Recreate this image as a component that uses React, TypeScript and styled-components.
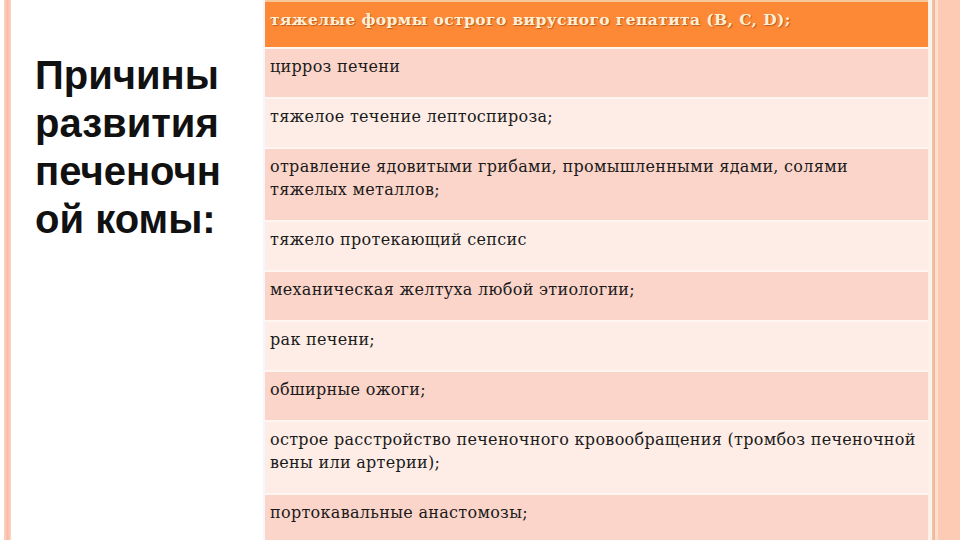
import { Fragment } from "react";
import styled, { createGlobalStyle } from "styled-components";

const GlobalStyle = createGlobalStyle`
  html, body {
    margin: 0;
    padding: 0;
    background: #ffffff;
  }
`;

// each cause is given as its printed lines
const causes: { lines: string[]; head?: boolean }[] = [
  { lines: ["тяжелые формы острого вирусного гепатита (B, C, D);"], head: true },
  { lines: ["цирроз печени"] },
  { lines: ["тяжелое течение лептоспироза;"] },
  {
    lines: [
      "отравление ядовитыми грибами, промышленными ядами, солями",
      "тяжелых металлов;",
    ],
  },
  { lines: ["тяжело протекающий сепсис"] },
  { lines: ["механическая желтуха любой этиологии;"] },
  { lines: ["рак печени;"] },
  { lines: ["обширные ожоги;"] },
  {
    lines: [
      "острое расстройство печеночного кровообращения (тромбоз печеночной",
      "вены или артерии);",
    ],
  },
  { lines: ["портокавальные анастомозы;"] },
];

export default function App() {
  return (
    <>
      <GlobalStyle />
      <Slide>
        <LeftRule />
        <TitleColumn>
          <Title>Причины развития печеночной комы:</Title>
        </TitleColumn>
        <Table>
          {causes.map((c, i) => {
            const Text = c.head ? HeadText : CellText;
            return (
              <Row key={i} $variant={c.head ? "head" : i % 2 === 1 ? "dark" : "light"}>
                <Text>
                  {c.lines.map((l, j) => (
                    <Fragment key={j}>
                      {j > 0 && <br />}
                      {l}
                    </Fragment>
                  ))}
                </Text>
              </Row>
            );
          })}
        </Table>
        <RightBand />
      </Slide>
    </>
  );
}

const Slide = styled.div`
  display: flex;
  width: 960px;
  height: 540px;
  overflow: hidden;
  background: #ffffff;
`;

const LeftRule = styled.div`
  flex: none;
  width: 7px;
  margin-left: 4px;
  background: linear-gradient(to right, #fdd3c4, #f9bca6 50%, #fdd3c4);
`;

const TitleColumn = styled.div`
  flex: none;
  width: 252px;
  box-sizing: border-box;
  padding: 51px 0 0 24px;
`;

const Title = styled.h1`
  margin: 0;
  width: 196px;
  font-family: "Liberation Sans", Arial, sans-serif;
  font-weight: 700;
  font-size: 40px;
  line-height: 48px;
  color: #111111;
  overflow-wrap: anywhere;
`;

const Table = styled.div`
  flex: none;
  width: 665px;
  display: flex;
  flex-direction: column;
  border-left: 2px solid #f4f6fb;
  box-sizing: border-box;
`;

const rowColors = {
  head: "#fd8836",
  dark: "#fcd5ca",
  light: "#fdede6",
};

const Row = styled.div<{ $variant: "head" | "dark" | "light" }>`
  flex: none;
  background: ${(p) => rowColors[p.$variant]};
  border-top: 2px solid ${(p) => (p.$variant === "head" ? "#f6c89a" : "#fff6f1")};
  padding: ${(p) => (p.$variant === "head" ? "6px 4px 16px 5px" : "6px 4px 19px 5px")};
`;

const CellText = styled.p`
  margin: 0;
  font-family: "DejaVu Serif", "Liberation Serif", serif;
  font-size: 16px;
  letter-spacing: 0.3px;
  line-height: 23px;
  color: #1a1a1a;
  white-space: nowrap;
`;

const HeadText = styled(CellText)`
  font-size: 15.5px;
  letter-spacing: 0.4px;
  font-weight: 700;
  color: #fdf0d6;
  text-shadow: 1px 1px 1px rgba(130, 60, 10, 0.55);
`;

const RightBand = styled.div`
  flex: 1;
  background: linear-gradient(
    to right,
    #fdf1ea 0px,
    #fdf1ea 4px,
    #f2c3a8 4px,
    #f2b592 7px,
    #fbe0d2 7px,
    #fbe0d2 10px,
    #fdcab3 10px
  );
`;
